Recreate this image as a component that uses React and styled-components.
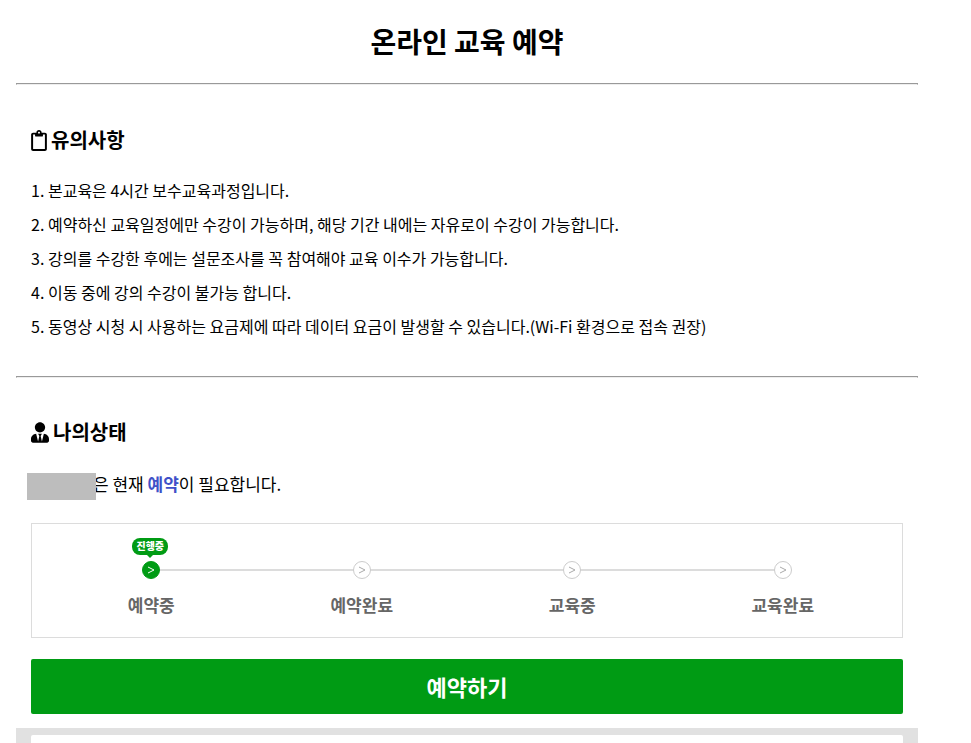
import React from "react";
import styled, { createGlobalStyle } from "styled-components";
import { FaRegClipboard, FaUserTie } from "react-icons/fa";

const GlobalStyle = createGlobalStyle`
  * { box-sizing: border-box; }
  body {
    margin: 0; background-color: #fff; color: #000;
    font-family: "Noto Sans CJK KR", "Noto Sans", sans-serif;
    font-size: 16px; line-height: 34px;
  }
`;

const Page = styled.div`
  display: flex; flex-direction: column;
  padding: 0 53px 0 16px;
`;

const Title = styled.h1`
  margin: 0; padding: 21px 0 22px;
  font-size: 28px; font-weight: 700; line-height: 40px;
  text-align: center;
`;

const Divider = styled.hr`
  width: 100%; margin: 0; border: 1px solid #999;
  border-bottom-color: #eee;
`;

const Section = styled.section`
  padding: 40px 15px 33px;
`;

const StatusSection = styled(Section)`
  padding-top: 39px; padding-bottom: 14px;
`;

const SectionTitle = styled.h2`
  display: flex; align-items: center; gap: 4px;
  margin: 0 0 18px; font-size: 20px; font-weight: 700; line-height: 30px;
`;

const NoticeIcon = styled(FaRegClipboard)`
  width: 16px; height: 21px;
`;

const UserIcon = styled(FaUserTie)`
  width: 18px; height: 21px;
`;

const NoticeList = styled.ol`
  margin: 0; padding: 0; list-style: none;
`;

const Status = styled.p`
  display: flex; align-items: center; margin: 0 0 22px;
  padding-top: 2px; font-size: 17px; line-height: 34px;
`;

const HiddenName = styled.span`
  width: 69px; height: 27px; margin: 4px -3px 0 -4px;
  background-color: #bdbdbd; z-index: 1;
`;

const Strong = styled.strong`
  color: #3f51c8; font-weight: 700;
`;

const Steps = styled.ol`
  display: grid; grid-template-columns: repeat(4, 1fr);
  margin: 0 0 21px; padding: 37px 14px 16px;
  border: 1px solid #dcdcdc; list-style: none;
`;

const Step = styled.li`
  position: relative;
  display: flex; flex-direction: column; align-items: center; gap: 10px;
  color: #666; font-size: 17px; font-weight: 700; line-height: 32px;

  &:not(:last-child)::after {
    content: ""; position: absolute; top: 8px; left: 50%;
    width: 100%; height: 2px; background-color: #dcdcdc;
  }
`;

const Marker = styled.span`
  position: relative; z-index: 1;
  display: flex; align-items: center; justify-content: center;
  width: 18px; height: 18px; border-radius: 50%;
  border: 1px solid ${({ $active }) => ($active ? "#009b14" : "#ccc")};
  background-color: ${({ $active }) => ($active ? "#009b14" : "#fff")};
  color: ${({ $active }) => ($active ? "#fff" : "#aaa")};
`;

const Bubble = styled.span`
  position: absolute; bottom: 23px; left: -11px;
  width: 36px; height: 17px; border-radius: 8px;
  background-color: #009b14; color: #fff;
  font-size: 10px; font-weight: 900; line-height: 16px; text-align: center;

  &::after {
    content: ""; position: absolute; top: 100%; left: 15px;
    border: 3px solid transparent; border-top-color: #009b14;
    border-bottom: 0;
  }
`;

const ReserveButton = styled.button`
  width: 100%; height: 55px; padding: 0 0 2px;
  border: 0; border-radius: 2px; background-color: #009b14;
  color: #fff; font-family: inherit; font-size: 22px; font-weight: 700;
  cursor: pointer;
`;

const Panel = styled.div`
  padding: 7px 15px 0; background-color: #e1e1e1;
`;

const PanelBody = styled.div`
  min-height: 8px; border-radius: 2px 2px 0 0; background-color: #fff;
`;

const notices = [
  "본교육은 4시간 보수교육과정입니다.",
  "예약하신 교육일정에만 수강이 가능하며, 해당 기간 내에는 자유로이 수강이 가능합니다.",
  "강의를 수강한 후에는 설문조사를 꼭 참여해야 교육 이수가 가능합니다.",
  "이동 중에 강의 수강이 불가능 합니다.",
  "동영상 시청 시 사용하는 요금제에 따라 데이터 요금이 발생할 수 있습니다.(Wi-Fi 환경으로 접속 권장)",
];

const steps = ["예약중", "예약완료", "교육중", "교육완료"];

const Arrow = () => (
  <svg width="8" height="8" viewBox="0 0 8 8" fill="none" stroke="currentColor" aria-hidden="true">
    <path d="M1 1 L7 4 L1 7" />
  </svg>
);

const App = () => {
  const current = 0;

  return (
    <>
      <GlobalStyle />
      <Page>
        <Title>온라인 교육 예약</Title>
        <Divider />
        <Section>
          <SectionTitle><NoticeIcon />유의사항</SectionTitle>
          <NoticeList>
            {notices.map((notice, i) => (
              <li key={notice}>{i + 1}. {notice}</li>
            ))}
          </NoticeList>
        </Section>
        <Divider />
        <StatusSection>
          <SectionTitle><UserIcon />나의상태</SectionTitle>
          <Status>
            <HiddenName />
            <span>은 현재 <Strong>예약</Strong>이 필요합니다.</span>
          </Status>
          <Steps>
            {steps.map((step, i) => (
              <Step key={step}>
                <Marker $active={i === current}>
                  {i === current && <Bubble>진행중</Bubble>}
                  <Arrow />
                </Marker>
                {step}
              </Step>
            ))}
          </Steps>
          <ReserveButton type="button">예약하기</ReserveButton>
        </StatusSection>
        <Panel>
          <PanelBody />
        </Panel>
      </Page>
    </>
  );
};

export default App;
